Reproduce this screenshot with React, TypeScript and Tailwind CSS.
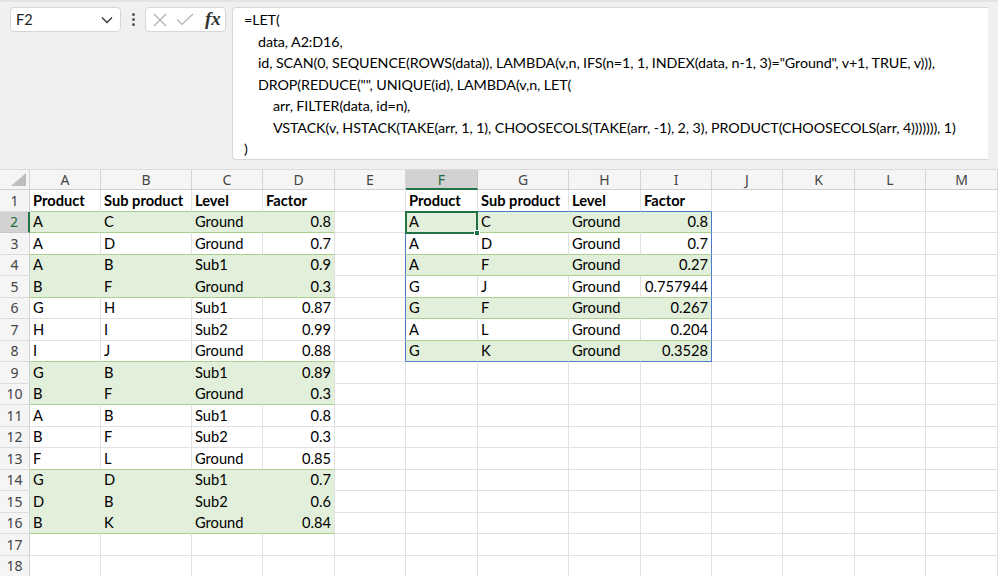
import React from 'react';

const COLS = ['A', 'B', 'C', 'D', 'E', 'F', 'G', 'H', 'I', 'J', 'K', 'L', 'M'];
const WIDTHS = [71, 91, 71, 72, 71, 72, 91, 72, 71, 71, 72, 71, 72];

type Cell = { v: string; num?: boolean; bold?: boolean };

const left: string[][] = [
  ['A', 'C', 'Ground', '0.8'],
  ['A', 'D', 'Ground', '0.7'],
  ['A', 'B', 'Sub1', '0.9'],
  ['B', 'F', 'Ground', '0.3'],
  ['G', 'H', 'Sub1', '0.87'],
  ['H', 'I', 'Sub2', '0.99'],
  ['I', 'J', 'Ground', '0.88'],
  ['G', 'B', 'Sub1', '0.89'],
  ['B', 'F', 'Ground', '0.3'],
  ['A', 'B', 'Sub1', '0.8'],
  ['B', 'F', 'Sub2', '0.3'],
  ['F', 'L', 'Ground', '0.85'],
  ['G', 'D', 'Sub1', '0.7'],
  ['D', 'B', 'Sub2', '0.6'],
  ['B', 'K', 'Ground', '0.84'],
];

const right: string[][] = [
  ['A', 'C', 'Ground', '0.8'],
  ['A', 'D', 'Ground', '0.7'],
  ['A', 'F', 'Ground', '0.27'],
  ['G', 'J', 'Ground', '0.757944'],
  ['G', 'F', 'Ground', '0.267'],
  ['A', 'L', 'Ground', '0.204'],
  ['G', 'K', 'Ground', '0.3528'],
];

const headers = ['Product', 'Sub product', 'Level', 'Factor'];
const leftGreen = [2, 4, 5, 9, 10, 14, 15, 16];
const rightGreen = [2, 4, 6, 8];

// c is 0-based column index (0 = A)
const isGreen = (r: number, c: number) => {
  if (c >= 0 && c <= 3) return leftGreen.includes(r);
  if (c >= 5 && c <= 8) return rightGreen.includes(r);
  return false;
};

const getCell = (r: number, c: number): Cell | null => {
  if (r === 1 && c <= 3) return { v: headers[c], bold: true };
  if (r === 1 && c >= 5 && c <= 8) return { v: headers[c - 5], bold: true };
  if (r >= 2 && r <= 16 && c <= 3) return { v: left[r - 2][c], num: c === 3 };
  if (r >= 2 && r <= 8 && c >= 5 && c <= 8) return { v: right[r - 2][c - 5], num: c === 8 };
  return null;
};

const rightBorder = (r: number, c: number) => {
  if ((c === 4 || c === 8) && r >= 2 && r <= 8) return 'border-r-[#4a7ac8]';
  if (isGreen(r, c) && isGreen(r, c + 1)) return 'border-r-[#e2efda]';
  return 'border-r-[#e1e1e1]';
};

const bottomBorder = (r: number, c: number) => {
  if (c >= 5 && c <= 8 && (r === 1 || r === 8)) return 'border-b-[#4a7ac8]';
  const g = isGreen(r, c);
  const n = isGreen(r + 1, c);
  if (g && n) return 'border-b-[#e2efda]';
  if (g || n) return 'border-b-[#a9d08e]';
  return 'border-b-[#e1e1e1]';
};

function XIcon() {
  return (
    <svg width="14" height="14" viewBox="0 0 14 14">
      <path d="M1 1 L13 13 M13 1 L1 13" stroke="#b3b3b3" strokeWidth="1.2" fill="none" />
    </svg>
  );
}

function CheckIcon() {
  return (
    <svg width="18" height="13" viewBox="0 0 18 13">
      <path d="M1 6.5 L6 11.5 L17 1" stroke="#b3b3b3" strokeWidth="1.2" fill="none" />
    </svg>
  );
}

function Chevron() {
  return (
    <svg width="12" height="8" viewBox="0 0 12 8">
      <path d="M1 1.5 L6 6.5 L11 1.5" stroke="#333" strokeWidth="1.3" fill="none" />
    </svg>
  );
}

const formula = [
  { indent: 0, text: '=LET(' },
  { indent: 1, text: 'data, A2:D16,' },
  { indent: 1, text: 'id, SCAN(0, SEQUENCE(ROWS(data)), LAMBDA(v,n, IFS(n=1, 1, INDEX(data, n-1, 3)="Ground", v+1, TRUE, v))),' },
  { indent: 1, text: 'DROP(REDUCE("", UNIQUE(id), LAMBDA(v,n, LET(' },
  { indent: 2, text: 'arr, FILTER(data, id=n),' },
  { indent: 2, text: 'VSTACK(v, HSTACK(TAKE(arr, 1, 1), CHOOSECOLS(TAKE(arr, -1), 2, 3), PRODUCT(CHOOSECOLS(arr, 4))))))), 1)' },
  { indent: 0, text: ')' },
];

function FormulaArea() {
  return (
    <div className="flex items-start px-[10px] pt-[5px] h-[169px] bg-[#f0f0f0] border-t-2 border-t-[#e4e4e4]">
      <div className="w-[111px] h-[25px] bg-white border border-[#d6d6d6] rounded-[4px] flex items-center justify-between pl-[5px] pr-[7px] text-[14.5px] text-[#222]">
        <span>F2</span>
        <Chevron />
      </div>
      <div className="w-[24px] h-[25px] flex flex-col items-center justify-center gap-[2px]">
        <div className="w-[3px] h-[3px] rounded-full bg-[#555]" />
        <div className="w-[3px] h-[3px] rounded-full bg-[#555]" />
        <div className="w-[3px] h-[3px] rounded-full bg-[#555]" />
      </div>
      <div className="w-[81px] h-[25px] bg-white border border-[#d6d6d6] rounded-[4px] flex items-center pl-[7px] gap-[9px]">
        <XIcon />
        <CheckIcon />
        <span className="italic text-[19px] leading-none text-[#333] ml-[2px] font-['Liberation_Serif',serif] font-semibold -mt-[2px]">fx</span>
      </div>
      <div className="ml-[6px] flex-1 h-[153px] bg-white border border-[#d6d6d6] border-r-0 rounded-l-[4px] pl-[11px] pt-[1px] text-[14.3px] tracking-[-0.1px] leading-[21.5px] text-black whitespace-nowrap overflow-hidden">
        {formula.map((l, i) => (
          <div key={i} className={l.indent === 0 ? '' : l.indent === 1 ? 'pl-[14px]' : 'pl-[29px]'}>
            {l.text}
          </div>
        ))}
      </div>
    </div>
  );
}

function HeaderRow() {
  return (
    <div className="flex h-[21px] bg-[#f5f5f5] border-t border-t-[#dadada]">
      <div className="w-[30px] h-full border-r border-r-[#d4d4d4] border-b border-b-[#cfcfcf] relative">
        <svg className="absolute right-[3px] bottom-[3px]" width="15" height="13" viewBox="0 0 15 13">
          <path d="M15 0 L15 13 L0 13 Z" fill="#bdbdbd" />
        </svg>
      </div>
      {COLS.map((c, i) => {
        const sel = c === 'F';
        return (
          <div
            key={c}
            style={{ width: WIDTHS[i] }}
            className={
              sel
                ? 'h-full flex items-center justify-center bg-[#d2d2d2] text-[#1e6b41] border-r border-r-[#c6c6c6] border-b-2 border-b-[#217346] text-[14px] font-["Noto_Sans",sans-serif]'
                : 'h-full flex items-center justify-center text-[#444] border-r border-r-[#d4d4d4] border-b border-b-[#cfcfcf] text-[14px] font-["Noto_Sans",sans-serif]'
            }
          >
            {c}
          </div>
        );
      })}
    </div>
  );
}

function Row({ r }: { r: number }) {
  const selRow = r === 2;
  return (
    <div className="flex h-[21.5px]">
      <div
        className={
          selRow
            ? 'w-[30px] shrink-0 h-full flex items-center justify-center bg-[#d2d2d2] text-[#1e6b41] border-r-2 border-r-[#217346] border-b border-b-[#c6c6c6] text-[14px] font-["Noto_Sans",sans-serif]'
            : 'w-[30px] shrink-0 h-full flex items-center justify-center bg-[#f5f5f5] text-[#444] border-r border-r-[#cfcfcf] border-b border-b-[#dcdcdc] text-[14px] font-["Noto_Sans",sans-serif]'
        }
      >
        {r}
      </div>
      {COLS.map((_, c) => {
        const cell = getCell(r, c);
        const green = isGreen(r, c);
        const selected = r === 2 && c === 5;
        return (
          <div
            key={c}
            style={{ width: WIDTHS[c] }}
            className={`relative shrink-0 h-full border-r border-b flex items-center px-[3px] pt-[1px] overflow-visible whitespace-nowrap ${rightBorder(r, c)} ${bottomBorder(r, c)} ${green ? 'bg-[#e2efda]' : 'bg-white'} ${cell?.num ? 'justify-end' : 'justify-start'} ${cell?.bold ? 'font-bold' : ''}`}
          >
            {cell?.v}
            {selected && (
              <div className="absolute -left-px -top-px w-[73px] h-[23.5px] border-2 border-[#217346] z-10">
                <div className="absolute -right-[4px] -bottom-[4px] w-[6px] h-[6px] bg-[#217346] border border-white" />
              </div>
            )}
          </div>
        );
      })}
    </div>
  );
}

export default function App() {
  const rows = Array.from({ length: 18 }, (_, i) => i + 1);
  return (
    <div className="w-[998px] h-[576px] overflow-hidden bg-white font-['Lato',sans-serif] text-[14.67px] text-black">
      <FormulaArea />
      <HeaderRow />
      {rows.map((r) => (
        <Row key={r} r={r} />
      ))}
    </div>
  );
}
